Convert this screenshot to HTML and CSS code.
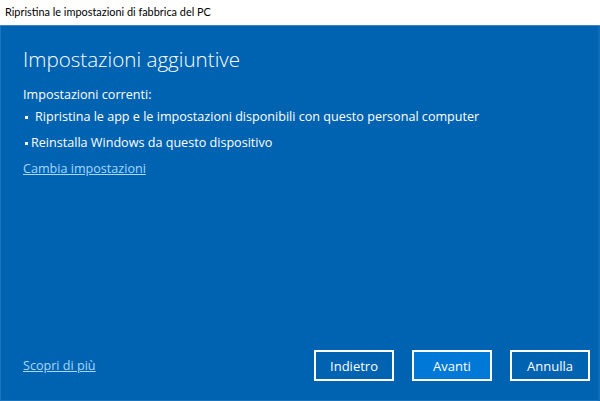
FILE: index.html
```html
<!DOCTYPE html>
<html lang="it">
<head>
<meta charset="utf-8">
<title>Ripristina le impostazioni di fabbrica del PC</title>
<link rel="stylesheet" href="styles.css">
</head>
<body>
<div class="window">
  <div class="titlebar">Ripristina le impostazioni di fabbrica del PC</div>
  <div class="panel">
    <div class="content">
      <h1 class="heading">Impostazioni aggiuntive</h1>
      <p class="label">Impostazioni correnti:</p>
      <ul class="list">
        <li class="item item-first">Ripristina le app e le impostazioni disponibili con questo personal computer</li>
        <li class="item">Reinstalla Windows da questo dispositivo</li>
      </ul>
      <a class="link" href="#">Cambia impostazioni</a>
    </div>
    <div class="footer">
      <a class="link" href="#">Scopri di più</a>
      <div class="buttons">
        <button class="btn">Indietro</button>
        <button class="btn btn-primary">Avanti</button>
        <button class="btn">Annulla</button>
      </div>
    </div>
  </div>
</div>
</body>
</html>
```
FILE: styles.css
```css
html, body {
  margin: 0;
  padding: 0;
  width: 600px;
  height: 401px;
  overflow: hidden;
  background: #ffffff;
}
.window {
  display: flex;
  flex-direction: column;
  width: 600px;
  height: 401px;
  font-family: "Open Sans", "Noto Sans", sans-serif;
}
.titlebar {
  height: 25px;
  line-height: 24px;
  padding-left: 5px;
  font-family: Lato, "Open Sans", sans-serif;
  font-size: 10.9px;
  color: #000000;
  background: #ffffff;
  box-sizing: border-box;
}
.panel {
  flex: 1;
  display: flex;
  flex-direction: column;
  justify-content: space-between;
  background: #0063b1;
  color: #ffffff;
  box-shadow: inset 0 1px 0 #3a86c4, inset -2px 0 0 #0f6cb6, inset 1px 0 0 #1d74ba, inset 0 -1px 0 #1d74ba;
}
.content {
  padding: 19px 0 0 23px;
}
.heading {
  margin: 0;
  font-size: 20.6px;
  font-weight: 300;
  line-height: 30px;
}
.label {
  margin: 12px 0 0;
  font-size: 12.6px;
  line-height: 18px;
}
.list {
  list-style: none;
  margin: 0;
  padding: 0;
}
.item {
  position: relative;
  font-size: 12.6px;
  line-height: 26px;
  padding-left: 8px;
}
.item::before {
  content: "";
  position: absolute;
  left: 2px;
  top: 12px;
  width: 3px;
  height: 3px;
  background: #ffffff;
}
.item-first {
  padding-left: 12px;
}
.link {
  display: inline-block;
  margin-top: 3px;
  font-size: 12.6px;
  line-height: 20px;
  color: #a6d8ff;
  text-decoration: underline;
}
.footer {
  display: flex;
  align-items: center;
  justify-content: space-between;
  padding: 0 10px 20px 23px;
}
.footer .link {
  margin-top: 0;
}
.buttons {
  display: flex;
  gap: 18px;
}
.btn {
  width: 80px;
  height: 31px;
  box-sizing: border-box;
  border: 2px solid #ffffff;
  background: #0063b1;
  color: #ffffff;
  font-family: "Open Sans", "Noto Sans", sans-serif;
  font-size: 13px;
  padding: 0;
}
.btn-primary {
  background: #0078d7;
}
```
